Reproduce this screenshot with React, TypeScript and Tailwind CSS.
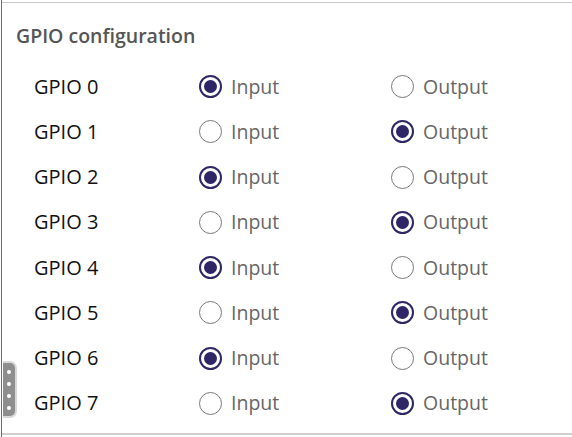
import React from "react";

const rows = [0, 1, 2, 3, 4, 5, 6, 7];

const Radio = ({ checked, label }: { checked: boolean; label: string }) => (
  <label className="flex items-center gap-[9px]">
    {checked ? (
      <span className="flex h-[23px] w-[23px] items-center justify-center rounded-full border-2 border-[#2e2666]">
        <span className="h-[13px] w-[13px] rounded-full bg-[#2e2666]" />
      </span>
    ) : (
      <span className="h-[23px] w-[23px] rounded-full border-[1.5px] border-[#7a7a7a]" />
    )}
    <span className="text-[19.5px] leading-6 text-[#666666]">{label}</span>
  </label>
);

export default function App() {
  return (
    <div
      className="h-[437px] w-[572px] overflow-hidden bg-white pl-px"
      style={{ fontFamily: '"Open Sans", "Noto Sans", sans-serif' }}
    >
      <div className="relative flex h-full flex-col border-l border-[#6b6b6b]">
        <div className="mt-[2px] h-px bg-[#c9c9c9]" />

        <h2 className="ml-[14px] mt-[21px] text-[19.5px] font-semibold leading-6 text-[#555555]">
          GPIO configuration
        </h2>

        <div className="mt-[16px] flex flex-col pl-[32px]">
          {rows.map((i) => (
            <div key={i} className="flex h-[45.25px] items-center">
              <span className="w-[165px] text-[20px] leading-6 text-[#111111]">GPIO {i}</span>
              <div className="w-[192px]">
                <Radio checked={i % 2 === 0} label="Input" />
              </div>
              <Radio checked={i % 2 === 1} label="Output" />
            </div>
          ))}
        </div>

        <div className="mt-auto mb-[2px] h-[2px] bg-[#cfcfcf]" />

        {/* resize grip */}
        <div className="absolute left-px top-[361px] flex h-[57px] w-[14px] flex-col items-center justify-center gap-[8px] rounded-r-[7px] border-2 border-l-0 border-[#d8d8d8] bg-[#8e8e8e]">
          <span className="h-[4px] w-[4px] rounded-full bg-white" />
          <span className="h-[4px] w-[4px] rounded-full bg-white" />
          <span className="h-[4px] w-[4px] rounded-full bg-white" />
          <span className="h-[4px] w-[4px] rounded-full bg-white" />
        </div>
      </div>
    </div>
  );
}
